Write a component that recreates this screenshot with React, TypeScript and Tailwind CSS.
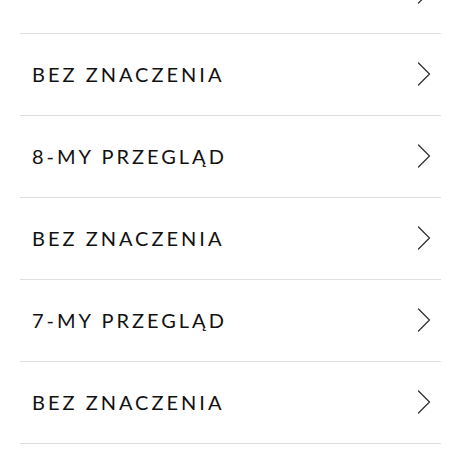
import React from "react";

const items = [
  "BEZ ZNACZENIA",
  "BEZ ZNACZENIA",
  "8-MY PRZEGLĄD",
  "BEZ ZNACZENIA",
  "7-MY PRZEGLĄD",
  "BEZ ZNACZENIA",
];

function Chevron() {
  return (
    <svg width="14" height="24" viewBox="0 0 14 24" fill="none" className="shrink-0">
      <path d="M1.5 1 L12.5 12 L1.5 23" stroke="#2a2a2a" strokeWidth="1.2" strokeLinecap="round" strokeLinejoin="miter" />
    </svg>
  );
}

export default function App() {
  return (
    <div className="w-[461px] h-[466px] overflow-hidden bg-white">
      <div className="mx-5 -mt-[48px]">
        {items.map((t, i) => (
          <div
            key={i}
            className="h-[82px] flex items-center justify-between border-b border-[#dedede] pl-3 pr-[10px] pb-[2px]"
          >
            <span
              className="text-[20px] font-normal tracking-[0.15em] text-[#111] leading-none"
              style={{ fontFamily: "Lato, 'Open Sans', sans-serif" }}
            >
              {t}
            </span>
            <Chevron />
          </div>
        ))}
      </div>
    </div>
  );
}
